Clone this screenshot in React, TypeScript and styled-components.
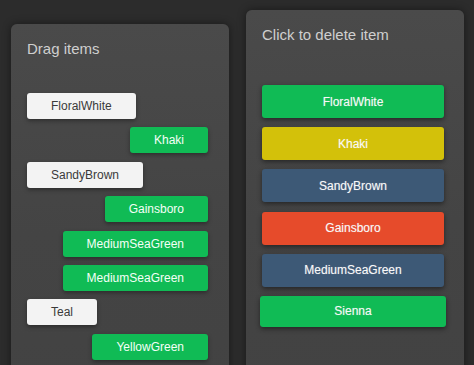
import React from 'react'
import styled, { createGlobalStyle } from 'styled-components'

const GlobalStyle = createGlobalStyle`
  html, body {
    margin: 0;
    padding: 0;
    height: 100%;
    overflow: hidden;
    background: #2c2c2c;
    font-family: "Liberation Sans", Arial, sans-serif;
  }
`

const Page = styled.div`
  display: flex;
  align-items: flex-start;
  gap: 17px;
  padding: 0 10px 0 11px;
  height: 365px;
  overflow: hidden;
`

const Panel = styled.div<{ $top: number }>`
  width: 218px;
  margin-top: ${props => props.$top}px;
  min-height: 420px;
  box-sizing: border-box;
  padding: 16px 20px 0 16px;
  border-radius: 6px;
  background: linear-gradient(180deg, #4a4a4a 0%, #444 50%, #424242 100%);
  box-shadow: 0 0 8px rgba(0, 0, 0, 0.45);
`

const Title = styled.h2<{ $gap: number }>`
  margin: 0 0 ${props => props.$gap}px;
  font-size: 15px;
  font-weight: 400;
  line-height: 17px;
  color: #cfcfcf;
`

const DragList = styled.div`
  display: flex;
  flex-direction: column;
  gap: 8.4px;
  padding-right: 1px;
`

const DragItem = styled.div<{ $active: boolean }>`
  align-self: ${props => (props.$active ? 'flex-end' : 'flex-start')};
  height: 26px;
  padding: 0 24px;
  display: flex;
  align-items: center;
  justify-content: center;
  border-radius: 3px;
  font-size: 12px;
  background: ${props => (props.$active ? '#10bb55' : '#f3f3f3')};
  color: ${props => (props.$active ? '#f4fff7' : '#3a3a3a')};
  box-shadow: 0 2px 4px rgba(0, 0, 0, 0.35);
`

const DeleteList = styled.div`
  display: flex;
  flex-direction: column;
  gap: 9.2px;
`

const DeleteItem = styled.div<{ $color: string; $hover?: boolean }>`
  height: ${props => (props.$hover ? 31 : 33)}px;
  margin: ${props => (props.$hover ? '0 -2px' : '0')};
  display: flex;
  align-items: center;
  justify-content: center;
  border-radius: 3px;
  font-size: 12px;
  color: #f8f8f8;
  text-shadow: 0 0 1px rgba(255, 255, 255, 0.4);
  background: ${props => props.$color};
  box-shadow: 0 2px 5px rgba(0, 0, 0, 0.45);
`

const dragItems = [
  { name: 'FloralWhite', active: false },
  { name: 'Khaki', active: true },
  { name: 'SandyBrown', active: false },
  { name: 'Gainsboro', active: true },
  { name: 'MediumSeaGreen', active: true },
  { name: 'MediumSeaGreen', active: true },
  { name: 'Teal', active: false },
  { name: 'YellowGreen', active: true },
]

const deleteItems = [
  { name: 'FloralWhite', color: '#10bb55' },
  { name: 'Khaki', color: '#d3c10a' },
  { name: 'SandyBrown', color: '#3d5976' },
  { name: 'Gainsboro', color: '#e64b2b' },
  { name: 'MediumSeaGreen', color: '#3d5976' },
  { name: 'Sienna', color: '#10bb55', hover: true },
]

export default function App() {
  return (
    <>
      <GlobalStyle />
      <Page>
        <Panel $top={24}>
          <Title $gap={36}>Drag items</Title>
          <DragList>
            {dragItems.map((item, i) => (
              <DragItem key={i} $active={item.active}>
                {item.name}
              </DragItem>
            ))}
          </DragList>
        </Panel>
        <Panel $top={10}>
          <Title $gap={42}>Click to delete item</Title>
          <DeleteList>
            {deleteItems.map((item, i) => (
              <DeleteItem key={i} $color={item.color} $hover={item.hover}>
                {item.name}
              </DeleteItem>
            ))}
          </DeleteList>
        </Panel>
      </Page>
    </>
  )
}
